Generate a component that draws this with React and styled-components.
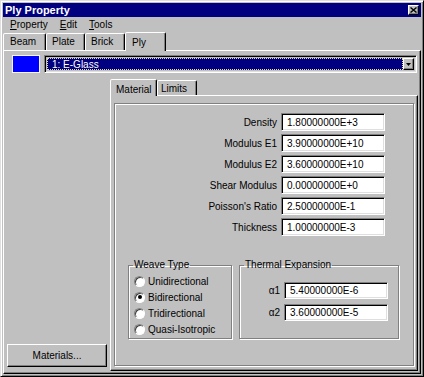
import { Fragment } from 'react';
import styled, { createGlobalStyle, css } from 'styled-components';

const GlobalStyle = createGlobalStyle`
  * { box-sizing: border-box; }
  html, body { margin: 0; padding: 0; background: #c0c0c0; }
  body {
    font-family: "Liberation Sans", Arial, sans-serif;
    font-size: 10px;
    color: #000;
  }
`;

const raised = css`
  border: 1px solid;
  border-color: #fff #000 #000 #fff;
  box-shadow: inset -1px -1px #808080;
`;

const sunken = css`
  border: 1px solid;
  border-color: #808080 #fff #fff #808080;
  box-shadow: inset 1px 1px #000, inset -1px -1px #dfdfdf;
`;

const etched = css`
  border: 1px solid #808080;
  box-shadow: inset 1px 1px #fff, 1px 1px #fff;
`;

const Window = styled.div`
  width: 424px;
  height: 377px;
  display: flex;
  flex-direction: column;
  padding: 2px;
  background: #c0c0c0;
  border: 1px solid;
  border-color: #dfdfdf #000 #000 #dfdfdf;
  box-shadow: inset 1px 1px #fff, inset -1px -1px #808080;
`;

const TitleBar = styled.div`
  height: 14px;
  flex-shrink: 0;
  display: flex;
  align-items: center;
  justify-content: space-between;
  padding: 0 2px 0 2px;
  background: #000080;
  color: #fff;
  font-weight: bold;
  font-size: 11px;
`;

const CloseButton = styled.div`
  width: 11px;
  height: 10px;
  display: flex;
  align-items: center;
  justify-content: center;
  background: #c0c0c0;
  ${raised};
`;

const MenuBar = styled.div`
  height: 15px;
  flex-shrink: 0;
  display: flex;
  align-items: center;
  padding-left: 1px;
`;

const MenuItem = styled.span`
  padding: 0 6px;
`;

const TabStrip = styled.div`
  height: ${({ $h }) => $h}px;
  flex-shrink: 0;
  display: flex;
  align-items: flex-end;
`;

const Tab = styled.div`
  width: ${({ $w }) => $w}px;
  height: ${({ $active, $h }) => ($active ? $h + 1 : $h - 1)}px;
  margin-bottom: ${({ $active }) => ($active ? -1 : 0)}px;
  position: relative;
  z-index: ${({ $active }) => ($active ? 1 : 0)};
  padding: ${({ $active }) => ($active ? 4 : 2)}px 0 0 ${({ $pad }) => $pad}px;
  background: #c0c0c0;
  border: 1px solid;
  border-bottom: none;
  border-color: #fff #000 transparent #fff;
  border-radius: 2px 2px 0 0;
  box-shadow: inset -1px 0 #808080;
  line-height: 11px;
`;

const Page = styled.div`
  flex: 1;
  display: flex;
  flex-direction: column;
  ${raised};
`;

const DropRow = styled.div`
  display: flex;
  gap: 4px;
  padding: 4px 3px 0 8px;
`;

const Swatch = styled.div`
  width: 28px;
  height: 18px;
  background: ${({ $color }) => $color};
  border: 1px solid #f4f4f4;
`;

const Select = styled.div`
  flex: 1;
  height: 18px;
  display: flex;
  padding: 2px;
  ${sunken};
`;

const SelectValue = styled.div`
  flex: 1;
  display: flex;
  align-items: center;
  padding-left: 5px;
  background: #000080;
  color: #fff;
  outline: 1px dotted #e8e0a0;
  outline-offset: -1px;
`;

const ArrowButton = styled.div`
  width: 11px;
  display: flex;
  align-items: center;
  justify-content: center;
  background: #c0c0c0;
  ${raised};
`;

const MainRow = styled.div`
  flex: 1;
  display: flex;
  margin-top: 5px;
`;

const LeftCol = styled.div`
  width: 104px;
  display: flex;
  flex-direction: column;
  justify-content: flex-end;
  padding: 0 0 6px 3px;
`;

const Button = styled.div`
  width: 100px;
  height: 23px;
  display: flex;
  align-items: center;
  justify-content: center;
  ${raised};
`;

const TabControl = styled.div`
  flex: 1;
  display: flex;
  flex-direction: column;
  margin: 0 2px 2px 2px;
`;

const TabPanel = styled.div`
  flex: 1;
  display: flex;
  padding: 7px 3px 4px 3px;
  ${raised};
`;

const Frame = styled.div`
  flex: 1;
  display: flex;
  flex-direction: column;
  padding-top: 9px;
  ${etched};
`;

const FieldGrid = styled.div`
  display: grid;
  grid-template-columns: ${({ $label }) => $label}px 104px;
  grid-auto-rows: ${({ $row }) => $row}px;
  column-gap: 4px;
  row-gap: ${({ $gap }) => $gap}px;
  padding-top: ${({ $top }) => $top || 0}px;
`;

const Label = styled.div`
  display: flex;
  align-items: center;
  justify-content: flex-end;
  white-space: nowrap;
`;

const Input = styled.div`
  display: flex;
  align-items: center;
  padding-left: 5px;
  background: #fff;
  ${sunken};
`;

const GroupRow = styled.div`
  display: flex;
  gap: 7px;
  margin-top: 23px;
  padding-left: 13px;
`;

const Group = styled.fieldset`
  width: ${({ $w }) => $w}px;
  height: 80px;
  margin: 0;
  padding: 0 4px 0 4px;
  min-width: 0;
  ${etched};
`;

const Legend = styled.legend`
  padding: 0 1px;
  margin-left: 0;
  line-height: 12px;
  font-size: 10px;
`;

const RadioList = styled.div`
  display: flex;
  flex-direction: column;
  padding-top: 2px;
`;

const RadioRow = styled.div`
  height: 16px;
  display: flex;
  align-items: center;
  gap: 3px;
  padding-left: 1px;
`;

const RadioCircle = styled.span`
  width: 11px;
  height: 11px;
  border-radius: 50%;
  display: flex;
  align-items: center;
  justify-content: center;
  background: #fff;
  border: 1px solid;
  border-color: #808080 #fff #fff #808080;
  box-shadow: inset 1px 1px #404040;
`;

const RadioDot = styled.span`
  width: 4px;
  height: 4px;
  border-radius: 50%;
  background: #000;
`;

const properties = [
  ['Density', '1.80000000E+3'],
  ['Modulus E1', '3.90000000E+10'],
  ['Modulus E2', '3.60000000E+10'],
  ['Shear Modulus', '0.00000000E+0'],
  ["Poisson's Ratio", '2.50000000E-1'],
  ['Thickness', '1.00000000E-3'],
];

const weaves = ['Unidirectional', 'Bidirectional', 'Tridirectional', 'Quasi-Isotropic'];

const expansion = [
  ['\u03b11', '5.40000000E-6'],
  ['\u03b12', '3.60000000E-5'],
];

export default function App() {
  return (
    <>
      <GlobalStyle />
      <Window>
        <TitleBar>
          <span>Ply Property</span>
          <CloseButton>
            <svg width="7" height="6" viewBox="0 0 7 6">
              <path d="M0.5 0.5 L6.5 5.5 M6.5 0.5 L0.5 5.5" stroke="#000" strokeWidth="1.4" />
            </svg>
          </CloseButton>
        </TitleBar>

        <MenuBar>
          <MenuItem><u>P</u>roperty</MenuItem>
          <MenuItem><u>E</u>dit</MenuItem>
          <MenuItem><u>T</u>ools</MenuItem>
        </MenuBar>

        <TabStrip $h={18}>
          <Tab $w={43} $h={18} $pad={6}>Beam</Tab>
          <Tab $w={39} $h={18} $pad={5}>Plate</Tab>
          <Tab $w={40} $h={18} $pad={5}>Brick</Tab>
          <Tab $w={41} $h={18} $pad={6} $active>Ply</Tab>
        </TabStrip>

        <Page>
          <DropRow>
            <Swatch $color="#0000ff" />
            <Select>
              <SelectValue>1: E-Glass</SelectValue>
              <ArrowButton>
                <svg width="5" height="3" viewBox="0 0 5 3">
                  <polygon points="0,0 5,0 2.5,3" fill="#000" />
                </svg>
              </ArrowButton>
            </Select>
          </DropRow>

          <MainRow>
            <LeftCol>
              <Button>Materials...</Button>
            </LeftCol>

            <TabControl>
              <TabStrip $h={17}>
                <Tab $w={47} $h={16} $pad={5} $active>Material</Tab>
                <Tab $w={40} $h={16} $pad={3}>Limits</Tab>
              </TabStrip>
              <TabPanel>
                <Frame>
                  <FieldGrid $label={162} $row={18} $gap={3}>
                    {properties.map(([label, value]) => (
                      <Fragment key={label}>
                        <Label>{label}</Label>
                        <Input>{value}</Input>
                      </Fragment>
                    ))}
                  </FieldGrid>

                  <GroupRow>
                    <Group $w={104}>
                      <Legend>Weave Type</Legend>
                      <RadioList>
                        {weaves.map((w) => (
                          <RadioRow key={w}>
                            <RadioCircle>{w === 'Bidirectional' && <RadioDot />}</RadioCircle>
                            {w}
                          </RadioRow>
                        ))}
                      </RadioList>
                    </Group>
                    <Group $w={160}>
                      <Legend>Thermal Expansion</Legend>
                      <FieldGrid $label={36} $row={17} $gap={5} $top={11}>
                        {expansion.map(([label, value]) => (
                          <Fragment key={label}>
                            <Label>{label}</Label>
                            <Input>{value}</Input>
                          </Fragment>
                        ))}
                      </FieldGrid>
                    </Group>
                  </GroupRow>
                </Frame>
              </TabPanel>
            </TabControl>
          </MainRow>
        </Page>
      </Window>
    </>
  );
}
